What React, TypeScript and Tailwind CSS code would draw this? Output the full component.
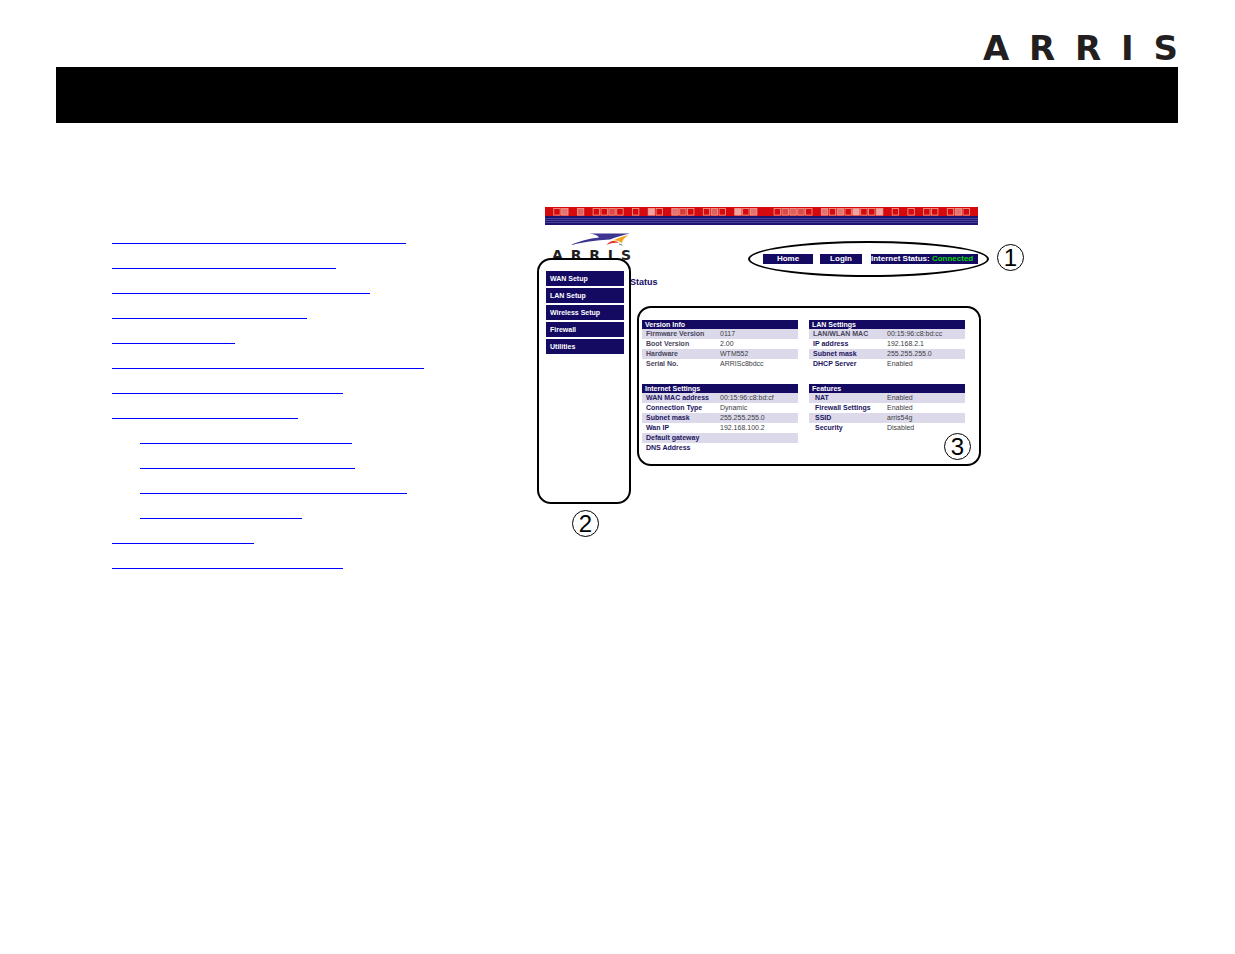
interface TocLink {
    width: string
    nested?: boolean
}

interface SettingsRow {
    label: string
    value: string
}

interface SettingsTableProps {
    title: string
    rows: SettingsRow[]
    muted?: number
    indented?: boolean
}

const tocLinks: TocLink[] = [
    { width: 'w-[294px]' },
    { width: 'w-[224px]' },
    { width: 'w-[258px]' },
    { width: 'w-[195px]' },
    { width: 'w-[123px]' },
    { width: 'w-[312px]' },
    { width: 'w-[231px]' },
    { width: 'w-[186px]' },
    { width: 'w-[212px]', nested: true },
    { width: 'w-[215px]', nested: true },
    { width: 'w-[267px]', nested: true },
    { width: 'w-[162px]', nested: true },
    { width: 'w-[142px]' },
    { width: 'w-[231px]' }
]

const menuItems = ['WAN Setup', 'LAN Setup', 'Wireless Setup', 'Firewall', 'Utilities']

const versionInfo: SettingsRow[] = [
    { label: 'Firmware Version', value: '0117' },
    { label: 'Boot Version', value: '2.00' },
    { label: 'Hardware', value: 'WTM552' },
    { label: 'Serial No.', value: 'ARRISc8bdcc' }
]

const lanSettings: SettingsRow[] = [
    { label: 'LAN/WLAN MAC', value: '00:15:96:c8:bd:cc' },
    { label: 'IP address', value: '192.168.2.1' },
    { label: 'Subnet mask', value: '255.255.255.0' },
    { label: 'DHCP Server', value: 'Enabled' }
]

const internetSettings: SettingsRow[] = [
    { label: 'WAN MAC address', value: '00:15:96:c8:bd:cf' },
    { label: 'Connection Type', value: 'Dynamic' },
    { label: 'Subnet mask', value: '255.255.255.0' },
    { label: 'Wan IP', value: '192.168.100.2' },
    { label: 'Default gateway', value: '' },
    { label: 'DNS Address', value: '' }
]

const features: SettingsRow[] = [
    { label: 'NAT', value: 'Enabled' },
    { label: 'Firewall Settings', value: 'Enabled' },
    { label: 'SSID', value: 'arris54g' },
    { label: 'Security', value: 'Disabled' }
]

// banner squares: [column, fill]
const squares: [number, string][] = [
    [1, 'none'], [2, '#e47373'], [4, '#e05f5f'], [6, 'none'], [7, 'none'], [8, '#da4a4a'], [9, 'none'],
    [11, 'none'], [13, '#f0a3a3'], [14, 'none'], [16, '#e47373'], [17, '#d93a3a'], [18, 'none'],
    [20, 'none'], [21, '#e05f5f'], [22, 'none'], [24, '#f0a3a3'], [25, 'none'], [26, '#e47373'],
    [29, 'none'], [30, '#da4a4a'], [31, '#e05f5f'], [32, '#da4a4a'], [33, 'none'],
    [35, '#e47373'], [36, 'none'], [37, '#e47373'], [38, 'none'], [39, '#f0a3a3'], [40, 'none'], [41, 'none'], [42, '#f0a3a3'],
    [44, 'none'], [46, 'none'], [48, 'none'], [49, 'none'], [51, 'none'], [52, '#e47373'], [53, 'none']
]

function Wordmark({ className }: { className: string }) {
    return (
        <div className={`flex justify-between font-['DejaVu_Sans',sans-serif] font-bold text-[#231f20] ${className}`}>
            {'ARRIS'.split('').map((letter, i) => (
                <span key={i}>{letter}</span>
            ))}
        </div>
    )
}

function Banner() {
    return (
        <svg viewBox="0 0 433 18" className="block h-[18px] w-full" preserveAspectRatio="none">
            <rect width="433" height="9" fill="#d40a0e" />
            <rect y="9" width="433" height="9" fill="#1c1470" />
            {[11, 13, 15].map((y) => (
                <rect key={y} y={y} width="433" height="1" fill="#4a439c" />
            ))}
            {squares.map(([column, fill]) => (
                <rect
                    key={column}
                    x={column * 7.87 + 0.9}
                    y="1.5"
                    width="6.4"
                    height="6.6"
                    fill={fill}
                    stroke="#f2a090"
                    strokeWidth="0.8"
                />
            ))}
        </svg>
    )
}

function Swoosh() {
    return (
        <svg viewBox="0 0 62 13" className="ml-[18px] block h-[13px] w-[62px]">
            <path d="M19 0.5H60C53 2 46 4 40 6.500C26 7 12 9.500 0 12C9 8.500 19 5.500 29 4.500C28 2.500 24 1 19 0.500Z" fill="#3d3590" />
            <path d="M59 2C52 3.500 46 6 42 8C46 7 50 8 52 10.500C52 7 55 4 59 2Z" fill="#f7a11a" />
            <path d="M42 8C39.500 9 37.500 10.500 36.500 12C41 10 45 9.300 49 10C47.500 8.300 45 7.600 42 8Z" fill="#e3342f" />
            <path d="M49 11L52.500 12.300" stroke="#555" strokeWidth="0.800" />
        </svg>
    )
}

function SettingsTable({ title, rows, muted = 0, indented }: SettingsTableProps) {
    return (
        <table className="w-full table-fixed border-collapse self-start text-left text-[7px] leading-[10px]">
            <thead>
                <tr className="h-[9px] bg-[#140a62] text-white">
                    <th colSpan={2} className="p-0 pl-[3px] leading-[9px]">{title}</th>
                </tr>
            </thead>
            <tbody>
                {rows.map((row, i) => (
                    <tr key={row.label} className="h-[10px] odd:bg-[#dcdaea]">
                        <th
                            className={`p-0 whitespace-nowrap ${indented ? 'pl-[6px]' : 'pl-[4px]'} ${i < muted ? 'text-[#48465c]' : 'text-[#1b1560]'}`}
                        >
                            {row.label}
                        </th>
                        <td className="p-0 whitespace-nowrap text-[#3c3c44]">{row.value}</td>
                    </tr>
                ))}
            </tbody>
        </table>
    )
}

function Callout({ number, className }: { number: number; className: string }) {
    return (
        <span
            className={`absolute flex size-[27px] items-center justify-center rounded-full border border-black text-2xl leading-none text-black ${className}`}
        >
            {number}
        </span>
    )
}

function RouterPage() {
    return (
        <figure className="relative w-[433px] shrink-0">
            <Banner />

            <header className="flex items-start justify-between pt-2">
                <div className="pl-[7px]">
                    <Swoosh />
                    <Wordmark className="mt-[2px] w-[79px] text-[14px] leading-[14px]" />
                </div>
                <div className="mt-[21px] flex text-[8px] leading-[10px] font-bold text-white">
                    <button className="w-[50px] bg-[#140a62]">Home</button>
                    <button className="ml-[7px] w-[42px] bg-[#140a62]">Login</button>
                    <p className="ml-[9px] w-[107px] bg-[#140a62] whitespace-nowrap">
                        Internet Status: <span className="text-[#00d800]">Connected</span>
                    </p>
                </div>
            </header>

            <div className="mt-[7px] flex">
                <nav className="flex w-[79px] shrink-0 flex-col gap-[2px] pl-px">
                    {menuItems.map((item) => (
                        <button
                            key={item}
                            className="h-[15px] bg-[#140a62] pl-1 text-left text-[7px] leading-[15px] font-bold text-white"
                        >
                            {item}
                        </button>
                    ))}
                </nav>
                <main className="grow pl-[6px]">
                    <h1 className="pt-[5px] text-[9px] leading-[12px] font-bold text-[#140a62]">Status</h1>
                    <div className="mt-8 mr-[13px] ml-3 grid grid-cols-2 gap-x-[11px] gap-y-[15px]">
                        <SettingsTable title="Version Info" rows={versionInfo} muted={4} />
                        <SettingsTable title="LAN Settings" rows={lanSettings} muted={1} />
                        <SettingsTable title="Internet Settings" rows={internetSettings} />
                        <SettingsTable title="Features" rows={features} indented />
                    </div>
                </main>
            </div>

            <div className="absolute top-[34px] left-[203px] h-[36px] w-[241px] rounded-[50%] border-2 border-black"></div>
            <div className="absolute top-[51px] -left-2 h-[246px] w-[94px] rounded-[14px] border-2 border-black"></div>
            <div className="absolute top-[99px] left-[92px] h-[160px] w-[344px] rounded-[14px] border-2 border-black"></div>
            <Callout number={1} className="top-[37px] left-[452px]" />
            <Callout number={2} className="top-[303px] left-[27px]" />
            <Callout number={3} className="top-[226px] left-[399px]" />
        </figure>
    )
}

export default function App() {
    return (
        <div className="min-h-screen bg-white px-14 pt-8 font-['Liberation_Sans',Arial,sans-serif]">
            <div className="mr-px flex h-[35px] justify-end">
                <Wordmark className="w-[195px] text-[34px] leading-[32px]" />
            </div>
            <div className="mr-px h-14 bg-black"></div>

            <div className="mt-[84px] flex pl-14">
                <nav className="flex w-[433px] shrink-0 flex-col pt-3">
                    {tocLinks.map((link, i) => (
                        <a
                            key={i}
                            href={`#section-${i + 1}`}
                            aria-label={`Section ${i + 1}`}
                            className={`mt-6 block h-px bg-[#0000ff] ${link.width} ${link.nested ? 'ml-7' : ''}`}
                        ></a>
                    ))}
                </nav>
                <RouterPage />
            </div>
        </div>
    )
}
